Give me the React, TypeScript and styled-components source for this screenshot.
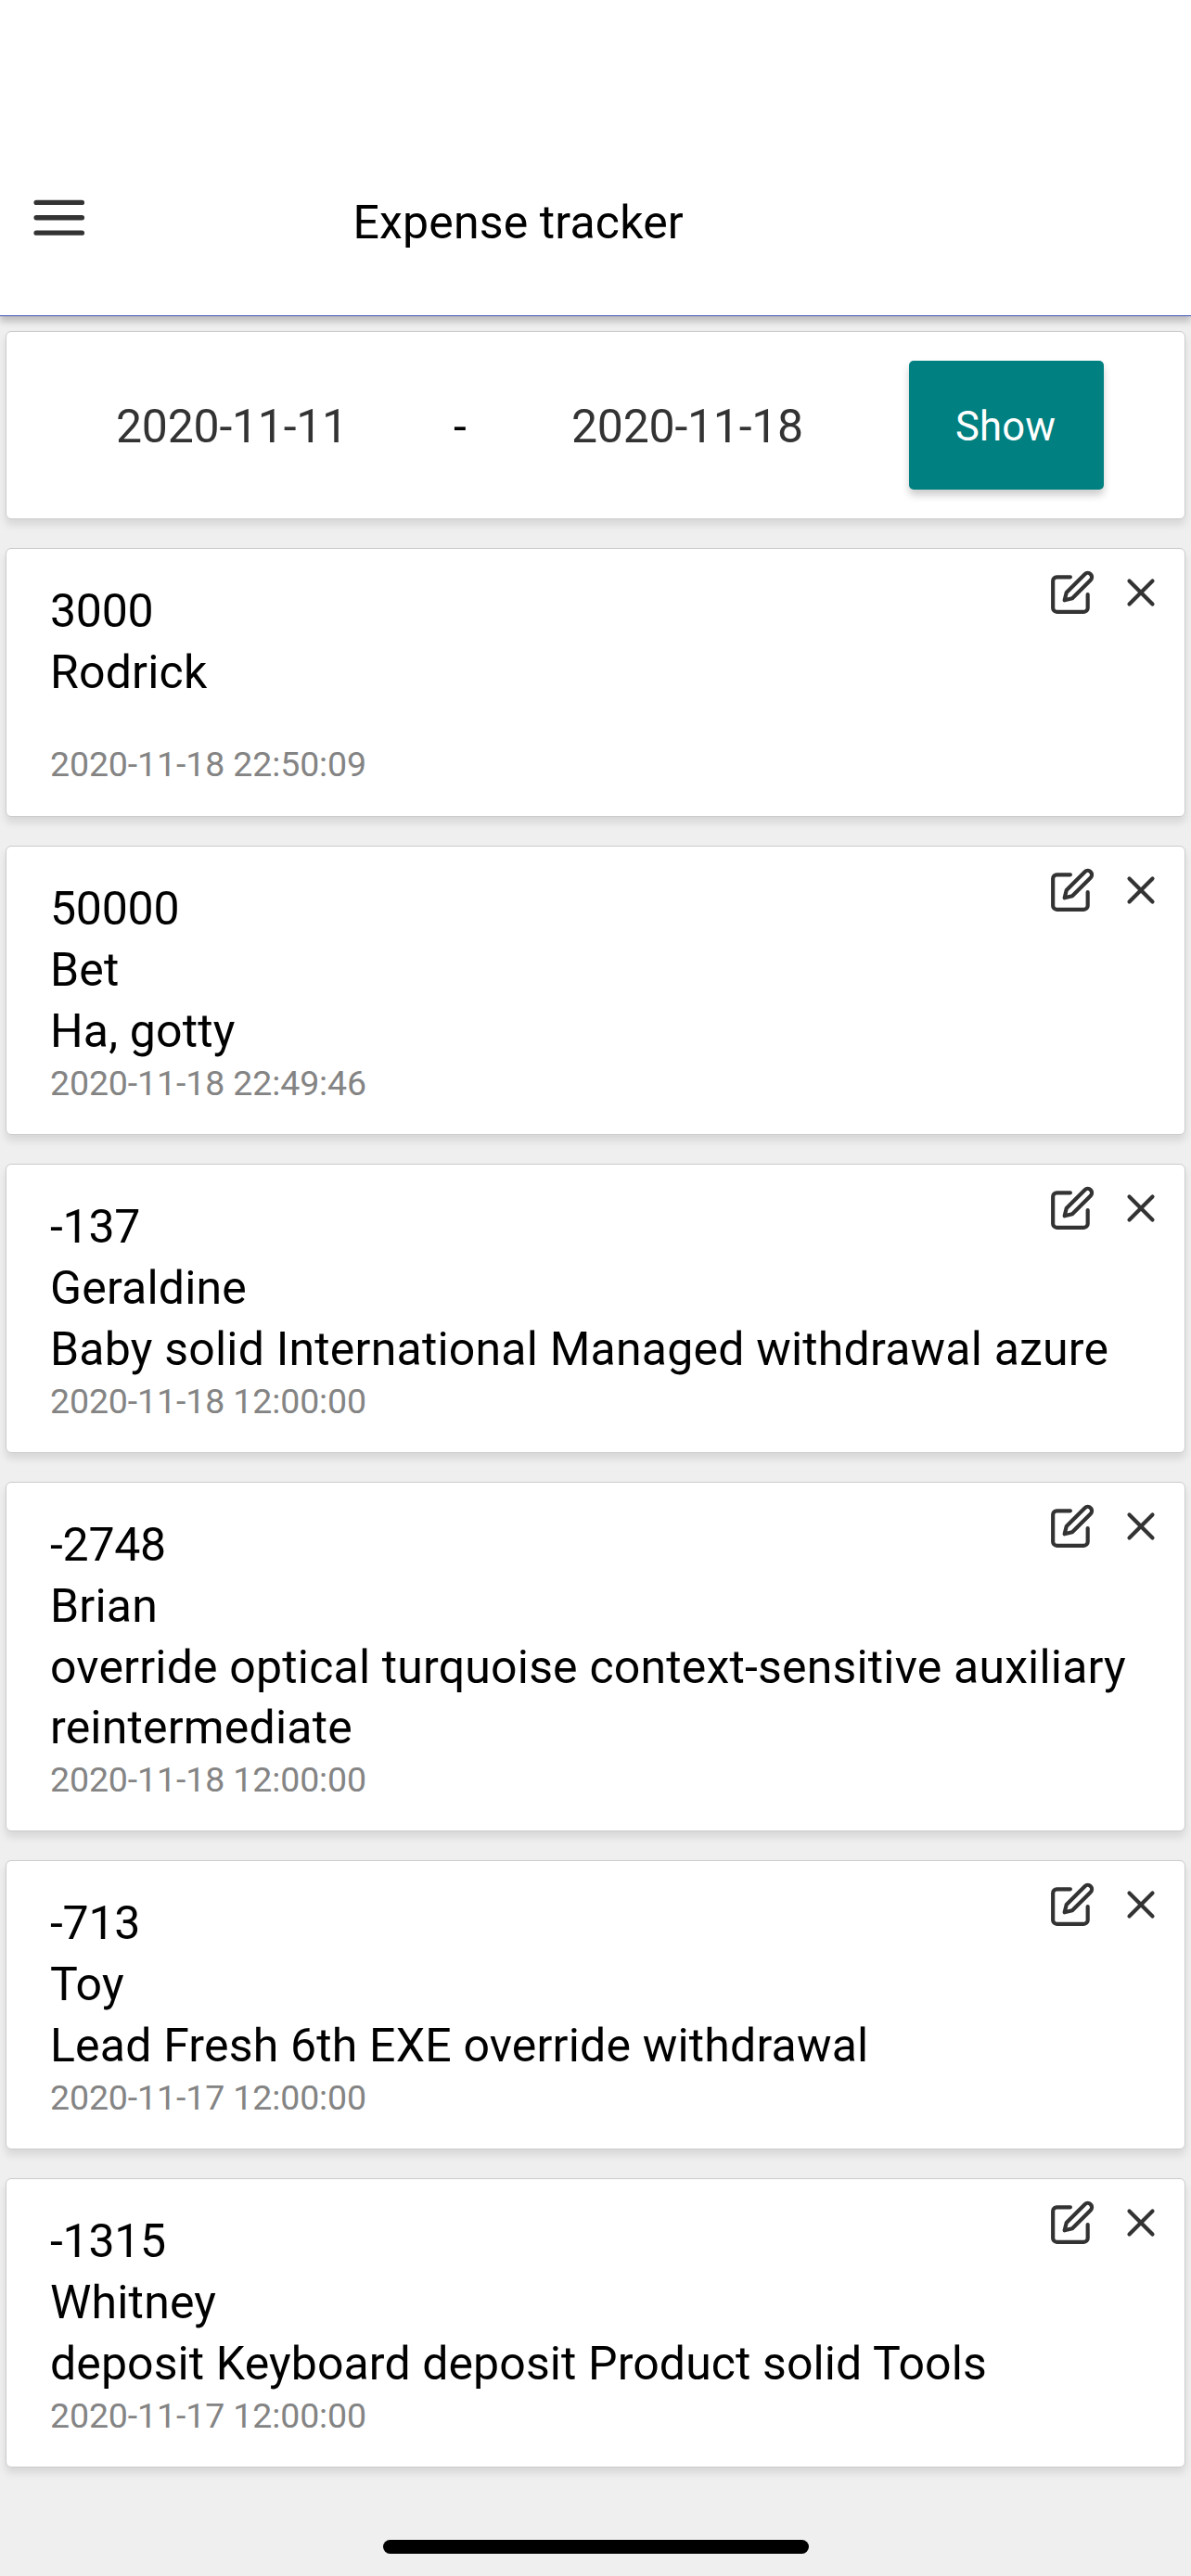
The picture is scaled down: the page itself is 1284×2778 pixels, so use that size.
import React from "react";
import styled, { createGlobalStyle } from "styled-components";
import { FiEdit, FiMenu, FiX } from "react-icons/fi";

const GlobalStyle = createGlobalStyle`
  * { box-sizing: border-box; }
  body { margin: 0; background: #efefef; }
  button { font: inherit; }
`;

const Screen = styled.div`
  display: flex;
  flex-direction: column;
  width: 1284px;
  height: 2778px;
  background: #efefef;
  color: #000;
  font-family: Roboto, sans-serif;
  font-size: 50px;
  line-height: 66px;
  overflow: hidden;
`;

const Header = styled.header`
  display: flex;
  align-items: flex-start;
  flex: none;
  height: 341px;
  padding: 202px 31px 0;
  background: #fff;
  border-bottom: 1px solid #3f51b5;
  box-shadow: 0 6px 7px rgba(0, 0, 0, 0.2);
`;

const IconButton = styled.button`
  display: flex;
  padding: 0;
  border: 0;
  background: none;
  color: #333;
`;

const Title = styled.h1`
  margin: 5px 0 0 284px;
  font-size: 50px;
  font-weight: 400;
  line-height: 66px;
  letter-spacing: 0.15px;
  white-space: nowrap;
`;

const Content = styled.main`
  display: flex;
  flex-direction: column;
  flex: 1;
  gap: 31px;
  padding: 16px 6px 0;
`;

const Card = styled.section`
  flex: none;
  background: #fff;
  border: 1px solid #ccc;
  border-radius: 6px;
  box-shadow: 0 6px 9px rgba(0, 0, 0, 0.1);
`;

const FilterCard = styled(Card)`
  display: flex;
  align-items: center;
  height: 203px;
  padding: 0 87px 0 118px;
`;

const DateField = styled.span`
  width: 251px;
  margin-top: 3px;
  color: #333;
  letter-spacing: -0.25px;
  white-space: nowrap;
`;

const Dash = styled.span`
  width: 240px;
  margin-top: 3px;
  text-align: center;
`;

const ShowButton = styled.button`
  width: 210px;
  height: 139px;
  margin-left: auto;
  padding: 4px 2px 0 0;
  border: 0;
  border-radius: 5px;
  background: #008080;
  color: #fff;
  font-size: 43.5px;
  letter-spacing: 0.2px;
  box-shadow: 0 6px 9px rgba(0, 0, 0, 0.2);
`;

const ExpenseCard = styled(Card)`
  position: relative;
  padding: 35px 46px 0 47px;
  height: ${(p: { $height: number }) => p.$height}px;
`;

const Actions = styled.div`
  position: absolute;
  top: 22px;
  right: 22px;
  display: flex;
  gap: 24px;
`;

const Line = styled.div<{ $tracking?: number }>`
  min-height: 43px;
  line-height: 65px;
  letter-spacing: ${(p) => p.$tracking ?? 0.18}px;
  &:not(:empty) {
    padding-bottom: 0.9px;
  }
`;

const Stamp = styled.time`
  display: block;
  font-size: 37.5px;
  line-height: 45px;
  letter-spacing: -0.12px;
  color: #848484;
`;

const HomeIndicator = styled.div`
  flex: none;
  align-self: center;
  width: 459px;
  height: 15px;
  margin-bottom: 24px;
  border-radius: 8px;
  background: #000;
`;

interface Expense {
  amount: string;
  name: string;
  note: string;
  time: string;
  height: number;
  noteTracking?: number;
}

const expenses: Expense[] = [
  { amount: "3000", name: "Rodrick", note: "", time: "2020-11-18 22:50:09", height: 290 },
  { amount: "50000", name: "Bet", note: "Ha, gotty", time: "2020-11-18 22:49:46", height: 312 },
  { amount: "-137", name: "Geraldine", note: "Baby solid International Managed withdrawal azure", time: "2020-11-18 12:00:00", height: 312, noteTracking: 0.2 },
  { amount: "-2748", name: "Brian", note: "override optical turquoise context-sensitive auxiliary reintermediate", time: "2020-11-18 12:00:00", height: 377 },
  { amount: "-713", name: "Toy", note: "Lead Fresh 6th EXE override withdrawal", time: "2020-11-17 12:00:00", height: 312 },
  { amount: "-1315", name: "Whitney", note: "deposit Keyboard deposit Product solid Tools", time: "2020-11-17 12:00:00", height: 312, noteTracking: 0.1 },
];

export default function App() {
  return (
    <Screen>
      <GlobalStyle />
      <Header>
        <IconButton aria-label="Menu">
          <FiMenu size={65.5} />
        </IconButton>
        <Title>Expense tracker</Title>
      </Header>
      <Content>
        <FilterCard>
          <DateField>2020-11-11</DateField>
          <Dash>-</Dash>
          <DateField>2020-11-18</DateField>
          <ShowButton>Show</ShowButton>
        </FilterCard>
        {expenses.map((e) => (
          <ExpenseCard key={e.amount} $height={e.height}>
            <Actions>
              <IconButton aria-label="Edit">
                <FiEdit size={50} />
              </IconButton>
              <IconButton aria-label="Delete">
                <FiX size={50} />
              </IconButton>
            </Actions>
            <Line $tracking={-0.25}>{e.amount}</Line>
            <Line>{e.name}</Line>
            <Line $tracking={e.noteTracking}>{e.note}</Line>
            <Stamp>{e.time}</Stamp>
          </ExpenseCard>
        ))}
      </Content>
      <HomeIndicator />
    </Screen>
  );
}
